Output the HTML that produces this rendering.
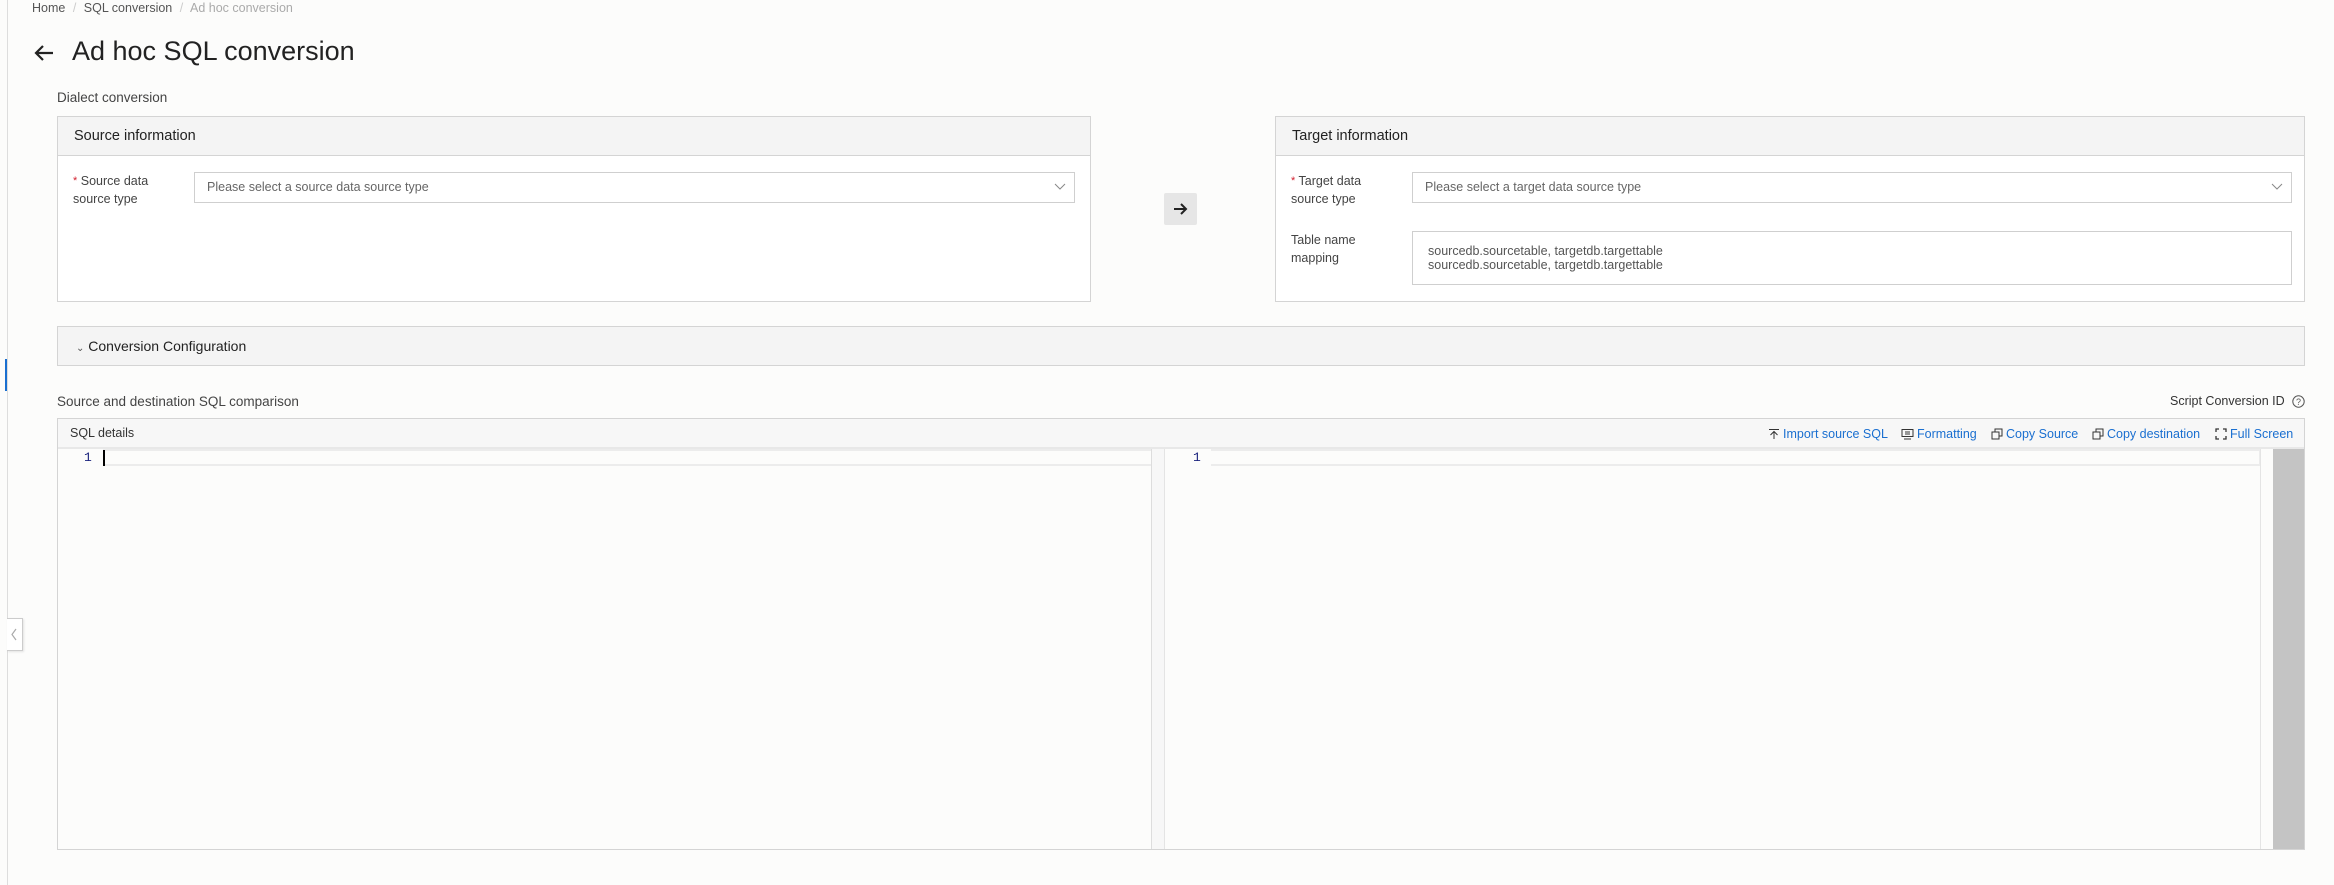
<!DOCTYPE html>
<html><head><meta charset="utf-8"><style>
*{box-sizing:border-box;margin:0;padding:0}
body{width:2334px;height:885px;background:#fcfcfb;font-family:"Liberation Sans",sans-serif;color:#333;position:relative;overflow:hidden}
.a{position:absolute}
.box{position:absolute;border:1px solid #d4d4d4;background:#fff}
.hdr{height:39px;background:#f4f4f4;border-bottom:1px solid #d4d4d4;font-size:14.5px;line-height:38px;padding-left:16px;color:#222}
.lbl{position:absolute;font-size:12.5px;line-height:18px;color:#444}
.lbl b{color:#d2202f;font-weight:normal;font-size:11px;vertical-align:top}
.sel{position:absolute;border:1px solid #cfcfcf;height:31px;font-size:12.5px;line-height:29px;padding-left:12px;color:#666;background:#fff}
.link{position:absolute;top:427px;font-size:12.5px;color:#1a6fd0;line-height:14px}
</style></head><body>
<div class="a" style="left:7px;top:0;width:1px;height:885px;background:#ddd"></div>
<div class="a" style="left:5px;top:359px;width:2px;height:32px;background:#1a6fd0"></div>
<div class="a" style="left:7px;top:618px;width:16px;height:33px;border:1px solid #ccc;border-left:none;background:#fff;box-shadow:1px 1px 2px rgba(0,0,0,.1)"><svg width="15" height="31" style="position:absolute;left:0;top:0"><path d="M9 10 L5 15.5 L9 21" stroke="#aaa" fill="none" stroke-width="1.2"/></svg></div>

<div class="a" style="left:32px;top:1px;font-size:12.5px;color:#555">Home <span style="color:#ccc;margin:0 4px">/</span> SQL conversion <span style="color:#ccc;margin:0 4px">/</span> <span style="color:#aaa">Ad hoc conversion</span></div>
<svg class="a" style="left:33px;top:43px" width="22" height="20"><path d="M20 10 H3 M10 3 L3 10 L10 17" stroke="#222" stroke-width="2.2" fill="none"/></svg>
<div class="a" style="left:72px;top:36px;font-size:27px;color:#222">Ad hoc SQL conversion</div>
<div class="a" style="left:57px;top:90px;font-size:13.5px;color:#444">Dialect conversion</div>

<div class="box" style="left:57px;top:116px;width:1034px;height:186px">
<div class="hdr">Source information</div>
<div class="lbl" style="left:15px;top:55px"><b>*</b> Source data<br>source type</div>
<div class="sel" style="left:136px;top:55px;width:881px">Please select a source data source type
<svg style="position:absolute;right:8px;top:9px" width="12" height="10"><path d="M1 2 L6 7 L11 2" stroke="#888" fill="none"/></svg></div>
</div>

<div class="a" style="left:1164px;top:193px;width:33px;height:32px;background:#e6e6e6;border-radius:2px"><svg width="33" height="32"><path d="M10 16 H22 M17 11 L22 16 L17 21" stroke="#222" stroke-width="2" fill="none"/></svg></div>

<div class="box" style="left:1275px;top:116px;width:1030px;height:186px">
<div class="hdr">Target information</div>
<div class="lbl" style="left:15px;top:55px"><b>*</b> Target data<br>source type</div>
<div class="sel" style="left:136px;top:55px;width:880px">Please select a target data source type
<svg style="position:absolute;right:8px;top:9px" width="12" height="10"><path d="M1 2 L6 7 L11 2" stroke="#888" fill="none"/></svg></div>
<div class="lbl" style="left:15px;top:114px">Table name<br>mapping</div>
<div class="sel" style="left:136px;top:114px;width:880px;height:54px;line-height:14px;padding-top:12px;padding-left:15px;color:#555">sourcedb.sourcetable, targetdb.targettable<br>sourcedb.sourcetable, targetdb.targettable</div>
</div>

<div class="box" style="left:57px;top:326px;width:2248px;height:40px;background:#f4f4f4"><div style="position:absolute;left:18px;top:11px;font-size:14px;color:#222"><span style="font-size:10px;color:#555">&#8964;</span> Conversion Configuration</div></div>

<div class="a" style="left:57px;top:394px;font-size:13.5px;color:#444">Source and destination SQL comparison</div>
<div class="a" style="left:2170px;top:394px;font-size:12.5px;color:#333">Script Conversion ID</div>
<svg class="a" style="left:2292px;top:395px" width="13" height="13"><circle cx="6.5" cy="6.5" r="5.7" stroke="#555" fill="none"/><text x="6.5" y="10" font-size="9" text-anchor="middle" fill="#555" font-family="Liberation Sans">?</text></svg>

<div class="box" style="left:57px;top:418px;width:2248px;height:432px;background:#fcfcfb">
<div style="height:30px;background:#f7f7f7;border-bottom:2px solid #e8e8e8;font-size:12.5px;line-height:28px;padding-left:12px;color:#333">SQL details</div>
</div>
<div class="a" style="left:103px;top:449px;width:1048px;height:17px;border:2px solid #ececec;border-left:none;border-right:none"></div>
<div class="a" style="left:103px;top:450px;width:2px;height:16px;background:#000"></div>
<div class="a" style="left:84px;top:450px;font-family:'Liberation Mono',monospace;font-size:13px;color:#1a237e">1</div>
<div class="a" style="left:1151px;top:449px;width:14px;height:400px;background:#f7f7f7;border-left:1px solid #ddd;border-right:1px solid #e4e4e4"></div>
<div class="a" style="left:1211px;top:449px;width:1050px;height:17px;border:2px solid #ececec;border-left:none"></div>
<div class="a" style="left:1193px;top:450px;font-family:'Liberation Mono',monospace;font-size:13px;color:#1a237e">1</div>
<div class="a" style="left:2273px;top:449px;width:31px;height:400px;background:#c4c4c4"></div>
<div class="a" style="left:2260px;top:449px;width:1px;height:400px;background:#e4e4e4"></div>

<svg class="a" style="left:1768px;top:428px" width="12" height="12"><path d="M1 1.5 H11 M6 11 V3.5 M2.5 7 L6 3.5 L9.5 7" stroke="#333" fill="none"/></svg>
<div class="link" style="left:1783px">Import source SQL</div>
<svg class="a" style="left:1901px;top:428px" width="13" height="12"><rect x="1" y="1.5" width="11" height="7" stroke="#333" fill="none"/><path d="M3 11 H10 M4 4 H9 M4 6 H9" stroke="#333"/></svg>
<div class="link" style="left:1917px">Formatting</div>
<svg class="a" style="left:1991px;top:428px" width="12" height="12"><rect x="1" y="4" width="7" height="7" stroke="#333" fill="none"/><path d="M4 4 V1 H11 V8 H8" stroke="#333" fill="none"/></svg>
<div class="link" style="left:2006px">Copy Source</div>
<svg class="a" style="left:2092px;top:428px" width="12" height="12"><rect x="1" y="4" width="7" height="7" stroke="#333" fill="none"/><path d="M4 4 V1 H11 V8 H8" stroke="#333" fill="none"/></svg>
<div class="link" style="left:2107px">Copy destination</div>
<svg class="a" style="left:2215px;top:428px" width="12" height="12"><path d="M1 4 V1 H4 M8 1 H11 V4 M11 8 V11 H8 M4 11 H1 V8" stroke="#333" fill="none" stroke-width="1.3"/></svg>
<div class="link" style="left:2230px">Full Screen</div>
</body></html>
